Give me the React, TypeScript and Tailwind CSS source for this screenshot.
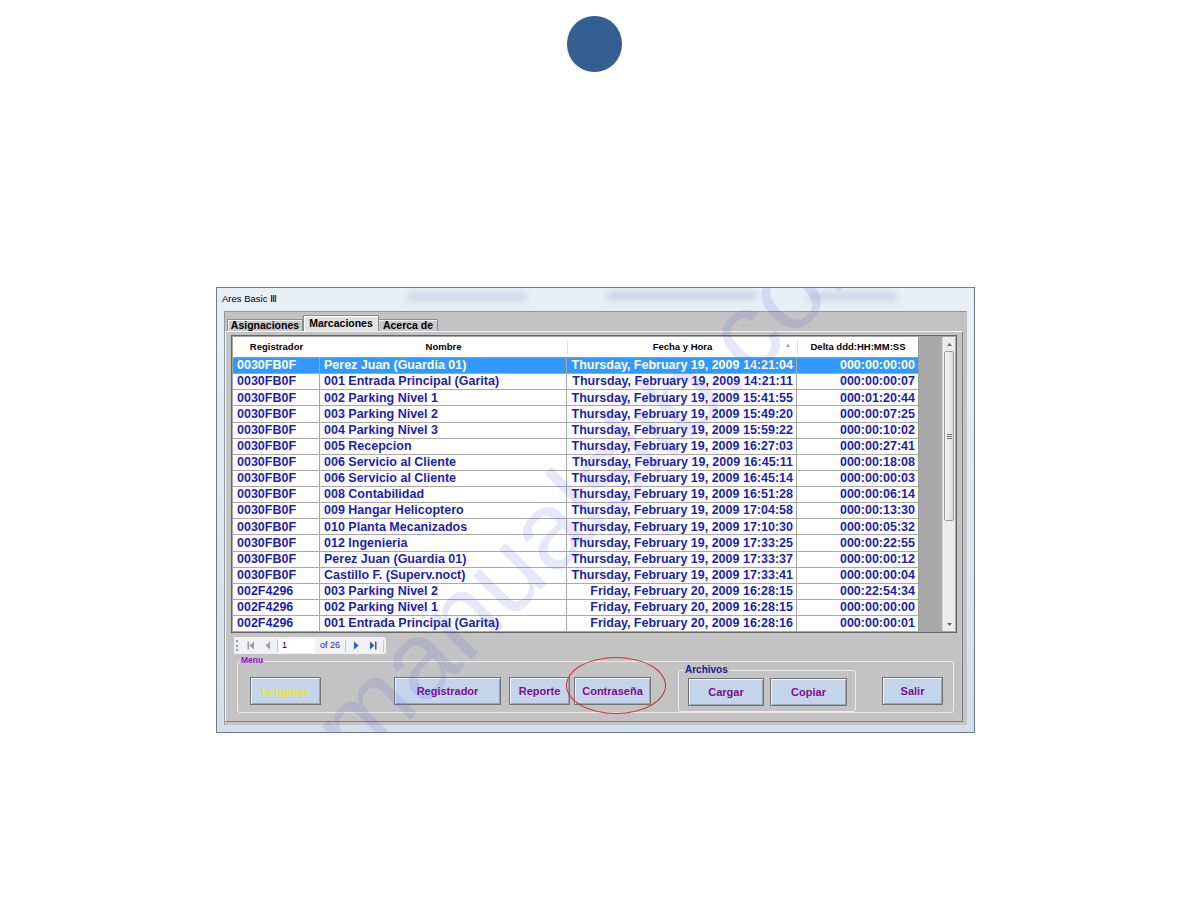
import React from 'react';

const ROWS: [string, string, string, string][] = [
  ['0030FB0F', 'Perez Juan (Guardia 01)', 'Thursday, February 19, 2009 14:21:04', '000:00:00:00'],
  ['0030FB0F', '001 Entrada Principal (Garita)', 'Thursday, February 19, 2009 14:21:11', '000:00:00:07'],
  ['0030FB0F', '002 Parking Nivel 1', 'Thursday, February 19, 2009 15:41:55', '000:01:20:44'],
  ['0030FB0F', '003 Parking Nivel 2', 'Thursday, February 19, 2009 15:49:20', '000:00:07:25'],
  ['0030FB0F', '004 Parking Nivel 3', 'Thursday, February 19, 2009 15:59:22', '000:00:10:02'],
  ['0030FB0F', '005 Recepcion', 'Thursday, February 19, 2009 16:27:03', '000:00:27:41'],
  ['0030FB0F', '006 Servicio al Cliente', 'Thursday, February 19, 2009 16:45:11', '000:00:18:08'],
  ['0030FB0F', '006 Servicio al Cliente', 'Thursday, February 19, 2009 16:45:14', '000:00:00:03'],
  ['0030FB0F', '008 Contabilidad', 'Thursday, February 19, 2009 16:51:28', '000:00:06:14'],
  ['0030FB0F', '009 Hangar Helicoptero', 'Thursday, February 19, 2009 17:04:58', '000:00:13:30'],
  ['0030FB0F', '010 Planta Mecanizados', 'Thursday, February 19, 2009 17:10:30', '000:00:05:32'],
  ['0030FB0F', '012 Ingenieria', 'Thursday, February 19, 2009 17:33:25', '000:00:22:55'],
  ['0030FB0F', 'Perez Juan (Guardia 01)', 'Thursday, February 19, 2009 17:33:37', '000:00:00:12'],
  ['0030FB0F', 'Castillo F. (Superv.noct)', 'Thursday, February 19, 2009 17:33:41', '000:00:00:04'],
  ['002F4296', '003 Parking Nivel 2', 'Friday, February 20, 2009 16:28:15', '000:22:54:34'],
  ['002F4296', '002 Parking Nivel 1', 'Friday, February 20, 2009 16:28:15', '000:00:00:00'],
  ['002F4296', '001 Entrada Principal (Garita)', 'Friday, February 20, 2009 16:28:16', '000:00:00:01'],
];

const BTN =
  'flex items-center justify-center h-[28px] bg-[#c4d5eb] border border-[#727272] shadow-[inset_1px_1px_0_#eef4fb,inset_-1px_-1px_0_#98a6b6] text-[11px] font-bold text-[#7d0f8c]';

function PagerIcon({ kind, color }: { kind: 'first' | 'prev' | 'next' | 'last'; color: string }) {
  return (
    <svg width="8" height="9" viewBox="0 0 8 9">
      {kind === 'first' && <><rect x="0.5" y="0.5" width="1.5" height="8" fill={color} /><path d="M7 0.5 L2.5 4.5 L7 8.5 Z" fill={color} /></>}
      {kind === 'prev' && <path d="M6 0.5 L1.5 4.5 L6 8.5 Z" fill={color} />}
      {kind === 'next' && <path d="M2 0.5 L6.5 4.5 L2 8.5 Z" fill={color} />}
      {kind === 'last' && <><path d="M1 0.5 L5.5 4.5 L1 8.5 Z" fill={color} /><rect x="6" y="0.5" width="1.5" height="8" fill={color} /></>}
    </svg>
  );
}

export default function App() {
  return (
    <div className="w-[1188px] h-[918px] bg-white font-['Liberation_Sans',Arial,sans-serif] overflow-hidden">
      <div className="pt-[16px]">
        <div className="mx-auto w-[55px] h-[56px] rounded-full bg-[#365f91]" />
      </div>

      {/* app window screenshot */}
      <div className="relative ml-[216px] mt-[215px] w-[759px] h-[446px] border border-[#6d7c8c] bg-linear-to-b from-[#e8eff7] via-[#dde7f2] to-[#d2deeb] overflow-hidden">
        <div className="absolute left-[190px] top-[4px] w-[120px] h-[10px] rounded bg-[#b9c6d6] blur-[3px] opacity-50" />
        <div className="absolute left-[390px] top-[3px] w-[150px] h-[9px] rounded bg-[#aebdcf] blur-[3px] opacity-50" />
        <div className="absolute left-[590px] top-[4px] w-[90px] h-[9px] rounded bg-[#b4c2d3] blur-[3px] opacity-50" />

        <div className="relative h-[23px] pl-[5px] pt-[5px] text-[9.5px] leading-[11px] text-black">Ares Basic Ⅲ</div>

        {/* client area */}
        <div className="relative mx-[7px] h-[414px] bg-[#c3c3c3] border-l border-t border-[#8d9aa8] pt-[3px]">
          {/* tabs */}
          <div className="flex items-end h-[16px] pl-[2px] text-[10.5px] font-bold text-black">
            <div className="h-[12px] w-[76px] flex items-center justify-center bg-[#c8c8c8] border border-b-0 border-[#8c8c8c] shadow-[inset_1px_1px_0_#f2f2f2] leading-none">Asignaciones</div>
            <div className="h-[16px] w-[76px] flex items-center justify-center bg-[#e2e2e2] border border-b-0 border-[#8c8c8c] shadow-[inset_1px_1px_0_#ffffff] leading-none">Marcaciones</div>
            <div className="h-[12px] w-[59px] flex items-center justify-center bg-[#c8c8c8] border border-b-0 border-l-0 border-[#8c8c8c] shadow-[inset_0_1px_0_#f2f2f2] leading-none">Acerca de</div>
          </div>

          {/* tab page */}
          <div className="w-[738px] h-[391px] border border-t-[#f4f4f4] border-l-[#f4f4f4] border-r-[#7e7e7e] border-b-[#7e7e7e] px-[5px] pt-[3px]">
            {/* grid */}
            <div className="w-[726px] h-[298px] border border-[#646464] bg-[#a6a6a6] p-[1px]">
              <div className="flex h-[294px] bg-white">
                <div className="w-[685px] overflow-hidden">
                  <div className="flex h-[21px] items-center text-[9.5px] font-bold text-black border-b border-[#9a9a9a]">
                    <div className="w-[87px] text-center">Registrador</div>
                    <div className="w-[247px] text-center">Nombre</div>
                    <div className="relative w-[230px] text-center border-l border-[#e2e2e2]">
                      Fecha y Hora
                      <span className="absolute right-[6px] top-[1px] text-[6px] text-[#9a9a9a]">▲</span>
                    </div>
                    <div className="w-[121px] text-center border-l border-[#e2e2e2]">Delta ddd:HH:MM:SS</div>
                  </div>
                  {ROWS.map((r, i) => (
                    <div
                      key={i}
                      className={`flex h-[16.125px] items-center text-[12.5px] font-bold leading-none border-b border-[#a9a9a9] ${i === 0 ? 'bg-[#3399ff] text-white' : 'text-[#1d1db4]'}`}
                    >
                      <div className="w-[87px] pl-[4px] border-r border-[#a9a9a9] h-full flex items-center whitespace-nowrap">{r[0]}</div>
                      <div className="w-[247px] pl-[4px] border-r border-[#a9a9a9] h-full flex items-center whitespace-nowrap overflow-hidden">{r[1]}</div>
                      <div className="w-[230px] pr-[3px] border-r border-[#a9a9a9] h-full flex items-center justify-end whitespace-nowrap">{r[2]}</div>
                      <div className="w-[121px] pr-[3px] h-full flex items-center justify-end whitespace-nowrap">{r[3]}</div>
                    </div>
                  ))}
                </div>
                <div className="w-[24px] bg-[#a9a9a9] border-l border-[#9a9a9a]" />
                {/* scrollbar */}
                <div className="w-[13px] bg-[#ececec] border-l border-[#d8d8d8] flex flex-col">
                  <div className="h-[14px] flex items-center justify-center">
                    <svg width="5" height="3" viewBox="0 0 5 3"><path d="M0 3 L2.5 0 L5 3 Z" fill="#6a6a6a" /></svg>
                  </div>
                  <div className="mx-[1px] h-[170px] rounded-[2px] border border-[#9c9c9c] bg-linear-to-r from-[#f4f4f4] to-[#dcdcdc] flex items-center justify-center">
                    <div className="flex flex-col gap-[1px]">
                      <div className="w-[5px] h-[1px] bg-[#7a7a7a]" />
                      <div className="w-[5px] h-[1px] bg-[#7a7a7a]" />
                      <div className="w-[5px] h-[1px] bg-[#7a7a7a]" />
                    </div>
                  </div>
                  <div className="flex-1" />
                  <div className="h-[14px] flex items-center justify-center">
                    <svg width="5" height="3" viewBox="0 0 5 3"><path d="M0 0 L2.5 3 L5 0 Z" fill="#6a6a6a" /></svg>
                  </div>
                </div>
              </div>
            </div>

            {/* pager */}
            <div className="mt-[4px] ml-[3px] w-[152px] h-[17px] rounded-r-[3px] bg-[#eff1f5] flex items-center text-[9px]">
              <div className="ml-[2px] w-[2px] h-[11px] border-l-2 border-dotted border-[#9a9a9a]" />
              <div className="ml-[9px]"><PagerIcon kind="first" color="#a0a0a0" /></div>
              <div className="ml-[9px]"><PagerIcon kind="prev" color="#a0a0a0" /></div>
              <div className="ml-[5px] w-[1px] h-[12px] bg-[#c8c8c8]" />
              <div className="ml-[1px] w-[36px] h-[14px] bg-white pl-[3px] flex items-center text-black">1</div>
              <div className="ml-[5px] text-[#1d1db4]">of 26</div>
              <div className="ml-[5px] w-[1px] h-[12px] bg-[#c8c8c8]" />
              <div className="ml-[6px]"><PagerIcon kind="next" color="#2a5bd0" /></div>
              <div className="ml-[9px]"><PagerIcon kind="last" color="#2a5bd0" /></div>
              <div className="ml-[6px] w-[1px] h-[12px] bg-[#c8c8c8]" />
            </div>

            {/* Menu group */}
            <div className="relative mt-[7px] ml-[6px] w-[717px] h-[52px] border border-[#ededed] rounded-[3px] pl-[12px] pt-[15px] flex items-start">
              <span className="absolute left-[2px] top-[-6px] px-[1px] bg-[#c3c3c3] text-[8.5px] leading-[9px] font-bold text-[#9a10c8]">Menu</span>
              <div className={`${BTN} w-[71px] !text-[#e6e62a]`}>Lenguaje</div>
              <div className={`${BTN} ml-[73px] w-[107px]`}>Registrador</div>
              <div className={`${BTN} ml-[8px] w-[61px]`}>Reporte</div>
              <div className={`${BTN} ml-[4px] w-[77px]`}>Contraseña</div>
              <div className="relative ml-[27px] -mt-[7px] w-[178px] h-[42px] border border-[#ededed] rounded-[3px] pl-[9px] pt-[7px] flex items-start">
                <span className="absolute left-[5px] top-[-7px] px-[1px] bg-[#c3c3c3] text-[10px] leading-[11px] font-bold text-[#1c1c8a]">Archivos</span>
                <div className={`${BTN} w-[76px]`}>Cargar</div>
                <div className={`${BTN} ml-[6px] w-[77px]`}>Copiar</div>
              </div>
              <div className={`${BTN} ml-[26px] w-[61px]`}>Salir</div>
              {/* red hand-drawn ellipse */}
              <div className="absolute left-[328px] top-[-5px] w-[100px] h-[57px] rounded-[50%] border-[1.5px] border-[#e0262c]" />
            </div>
          </div>
        </div>

        {/* watermark */}
        <div className="pointer-events-none absolute left-[384px] top-[188px] -translate-x-1/2 -translate-y-1/2 -rotate-45 whitespace-nowrap text-[110px] leading-none text-[#4f4fdc] opacity-[0.13]">
          manualslib.com
        </div>
      </div>
    </div>
  );
}
